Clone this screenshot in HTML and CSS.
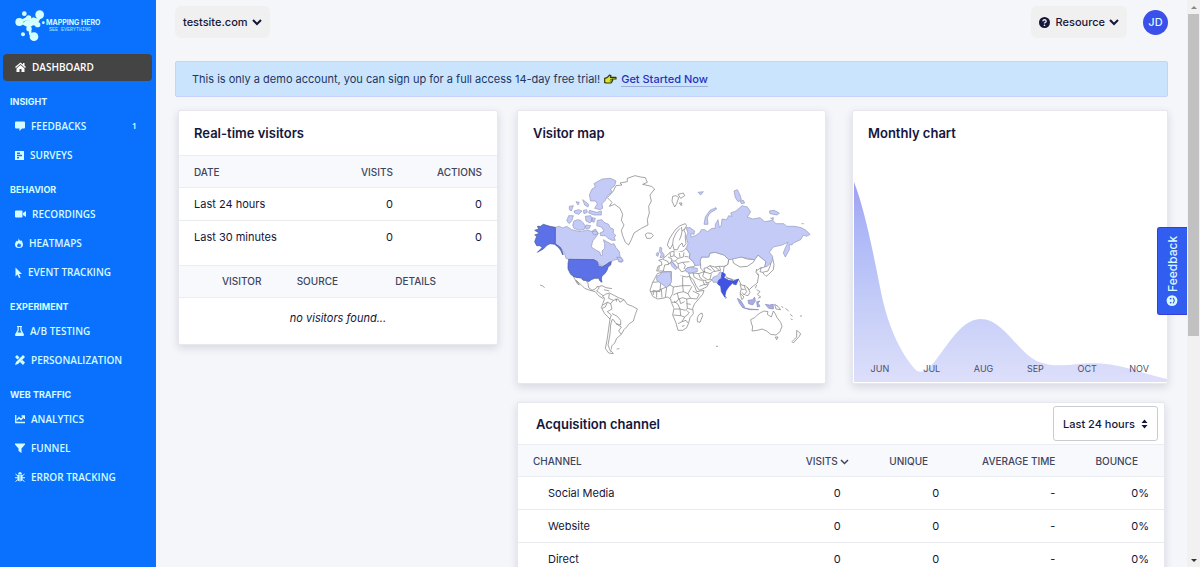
FILE: index.html
```html
<!DOCTYPE html>
<html lang="en">
<head>
<meta charset="utf-8">
<title>Mapping Hero - Dashboard</title>
<link rel="stylesheet" href="styles.css">
</head>
<body>
<div class="app">
  <aside class="sidebar">
    <div class="brand">
      <svg class="brand-mark" width="30" height="32" viewBox="0 0 90 96" aria-hidden="true">
        <g fill="#d4fdff" stroke="#d4fdff">
          <path d="M14 36 38 24 62 36M76 18 62 42M44 50 46 72 58 80" fill="none" stroke-width="8"/>
          <path d="M34 30Q46 34 54 22L70 26 66 48 54 46 42 54 20 42Z" stroke="none"/>
        </g>
        <g fill="#d4fdff">
          <circle cx="74" cy="14" r="13"/><circle cx="13" cy="36" r="12"/><circle cx="41" cy="24" r="8"/>
          <circle cx="68" cy="44" r="8"/><circle cx="42" cy="56" r="8"/><circle cx="57" cy="80" r="13"/>
          <circle cx="28" cy="11" r="7"/><circle cx="24" cy="73" r="6"/><circle cx="85" cy="38" r="4"/>
        </g>
      </svg>
      <div class="brand-text"><span class="brand-name">MAPPING HERO</span><span class="brand-tag">SEE EVERYTHING</span></div>
    </div>
    <nav>
      <a class="nav-item active" href="#"><svg width="11" height="10" viewBox="0 0 22 20"><path fill="currentColor" d="M11 1 0 10l2 2 9-8 9 8 2-2-3-2.500V2h-3v3zM11 6l-8 7v7h6v-6h4v6h6v-7z"/></svg>DASHBOARD</a>
      <h2 class="nav-title">INSIGHT</h2>
      <a class="nav-item" href="#"><svg width="10" height="10" viewBox="0 0 20 20"><path fill="currentColor" d="M2 1h16q2 0 2 2v10q0 2-2 2h-4l-5 5v-5H2q-2 0-2-2V3q0-2 2-2z"/></svg>FEEDBACKS<span class="count">1</span></a>
      <a class="nav-item" href="#"><svg width="9" height="9" viewBox="0 0 18 18"><path fill="currentColor" fill-rule="evenodd" d="M1 0h16q1 0 1 1v16q0 1-1 1H1q-1 0-1-1V1q0-1 1-1zM4 3v3h6V3zM4 7.500v3h10v-3zM4 12v3h4v-3z"/></svg>SURVEYS</a>
      <h2 class="nav-title">BEHAVIOR</h2>
      <a class="nav-item" href="#"><svg width="11" height="10" viewBox="0 0 22 20"><path fill="currentColor" d="M2 3h11q2 0 2 2v10q0 2-2 2H2q-2 0-2-2V5q0-2 2-2zM16 8l6-4v12l-6-4z"/></svg>RECORDINGS</a>
      <a class="nav-item" href="#"><svg width="8" height="10" viewBox="0 0 16 20"><path fill="currentColor" fill-rule="evenodd" d="M7 0q1 4 4 6l1-2q4 4 4 9 0 7-8 7t-8-7q0-5 4-8l1 2Q8 5 7 0zm1 10q-4 3-4 5 0 3 4 3t4-3q0-2-2-4l-1 2z"/></svg>HEATMAPS</a>
      <a class="nav-item" href="#"><svg width="7" height="11" viewBox="0 0 14 22"><path fill="currentColor" d="M1 1v18l4-4 3 7 3-1-3-7h6z"/></svg>EVENT TRACKING</a>
      <h2 class="nav-title">EXPERIMENT</h2>
      <a class="nav-item" href="#"><svg width="9" height="10" viewBox="0 0 18 20"><path fill="currentColor" fill-rule="evenodd" d="M4 0h10v2h-1v6l5 9q0 3-2 3H2q-2 0-2-3l5-9V2H4zM7.500 2v7L5 13h8l-2.500-4V2z"/></svg>A/B TESTING</a>
      <a class="nav-item" href="#"><svg width="10" height="10" viewBox="0 0 20 20"><path fill="currentColor" d="m4 0 5 5-4 4-5-5zM15 10l5 5-4 5-6-6zM16 0l4 4L6 18l-6 2 2-6z"/></svg>PERSONALIZATION</a>
      <h2 class="nav-title">WEB TRAFFIC</h2>
      <a class="nav-item" href="#"><svg width="10" height="10" viewBox="0 0 20 20"><path fill="none" stroke="currentColor" stroke-width="2.600" d="M1.500 2v15H20M4 12l4-5 4 4 6-6M13 4h6v6"/></svg>ANALYTICS</a>
      <a class="nav-item" href="#"><svg width="10" height="10" viewBox="0 0 20 20"><path fill="currentColor" d="M0 1h20v2l-7 8v9l-6-4v-5L0 3z"/></svg>FUNNEL</a>
      <a class="nav-item" href="#"><svg width="10" height="10" viewBox="0 0 20 20"><path fill="currentColor" d="M6 5q0-5 4-5t4 5zM5 6h4.300v13Q5 18 5 14zM10.700 6H15v8q0 4-4.300 5z"/><path fill="none" stroke="currentColor" stroke-width="2" d="M1 4l5 4M19 4l-5 4M0 11.500h6M20 11.500h-6M1 19l5-4M19 19l-5-4"/></svg>ERROR TRACKING</a>
    </nav>
  </aside>

  <main class="main">
    <header class="topbar">
      <button class="pill site" type="button">testsite.com<svg width="10" height="7" viewBox="0 0 10 7"><path d="M1 1l4 4 4-4" fill="none" stroke="currentColor" stroke-width="2"/></svg></button>
      <div class="top-right">
        <button class="pill" type="button"><svg class="help" width="11" height="11" viewBox="0 0 22 22"><circle cx="11" cy="11" r="11" fill="currentColor"/><path d="M7.500 8.500Q8 5.500 11 5.500t3.500 3Q14.500 10.500 11 12v1" fill="none" stroke="#f0f0f1" stroke-width="2.600"/><circle cx="11" cy="16.500" r="1.700" fill="#f0f0f1"/></svg>Resource<svg width="10" height="7" viewBox="0 0 10 7"><path d="M1 1l4 4 4-4" fill="none" stroke="currentColor" stroke-width="2"/></svg></button>
        <button class="avatar" type="button">JD</button>
      </div>
    </header>

    <p class="banner"><span>This is only a demo account, you can sign up for a full access 14-day free trial!</span>
      <svg width="13" height="10" viewBox="0 0 39 30" aria-hidden="true"><path d="M2 13 9 11 17 3l4 2-2 5h17v5H25l1 4-2 4-3 4H8l-6-1z" fill="#dbe632" stroke="#30370c" stroke-width="3.500" stroke-linejoin="round"/><path d="M18 16h7M17 21h7" stroke="#30370c" stroke-width="2"/></svg>
      <a href="#">Get Started Now</a></p>

    <div class="board">
      <section class="card visitors">
        <h3 class="card-title">Real-time visitors</h3>
        <table class="totals">
          <thead><tr><th class="c-date">DATE</th><th class="c-visits">VISITS</th><th class="c-actions">ACTIONS</th></tr></thead>
          <tbody><tr><td>Last 24 hours</td><td>0</td><td>0</td></tr><tr><td>Last 30 minutes</td><td>0</td><td>0</td></tr></tbody>
        </table>
        <table class="recent">
          <thead><tr><th class="c-visitor">VISITOR</th><th class="c-source">SOURCE</th><th>DETAILS</th></tr></thead>
          <tbody><tr><td colspan="3">no visitors found...</td></tr></tbody>
        </table>
      </section>

      <div class="wide">
        <div class="pair">
          <section class="card">
            <h3 class="card-title">Visitor map</h3>
            <svg class="map" viewBox="0 0 900 600" role="img" aria-label="World map of visitors">
              <g class="land">
                <path d="M268 104 262 98 280 78 288 62 306 60 300 54 322 50 322 40 345 32 362 36 376 38 382 52 368 58 394 64 404 72 390 90 394 108 386 124 388 144 382 164 384 180 364 190 342 204 334 224 326 240 316 232 308 212 304 196 312 180 304 166 308 148 300 130 284 118 268 124 276 112Z"/>
                <path d="M376 208 382 204 394 205 400 212 392 220 380 220Z"/>
                <path d="M160 334 180 338 188 344 198 346 204 356 206 368 216 376 226 372 232 364 238 368 230 378 236 382 246 390 256 396 248 400 236 392 226 380 210 376 194 370 182 358 168 346 178 360 172 356Z"/>
                <path d="M232 366 246 362 258 368 276 371M252 374 268 378M60 360 68 363 74 368M290 552 298 551"/>
                <path d="M256 388 268 384 284 392 300 400 312 404 322 418 338 424 352 432 346 448 340 468 328 476 320 486 312 494 304 508 290 520 284 534 276 542 272 556 280 566 266 564 256 550 262 520 266 490 270 462 254 446 244 428 250 412 254 400 248 394Z"/>
                <path d="M268 386 266 400 280 406 272 416 262 412 248 420M280 406 294 402 300 412 312 404M288 400 290 410M272 416 276 432 262 440 274 450 270 462M276 446 292 454 302 466 302 480 288 476 280 464 276 464 272 480 270 508 264 540 272 560M288 476 304 486 296 498 304 508M262 412 256 426 246 430"/>
              </g>
              <g class="light">
                <path d="M106 187 118 184 128 189 140 184 155 194 172 198 185 200 200 195 215 199 226 192 235 205 228 216 218 228 214 246 226 254 240 262 242 272 248 270 246 258 254 250 254 236 250 224 264 232 274 238 282 236 288 248 298 260 300 274 308 284 306 292 296 290 294 282 280 286 272 292 262 296 250 304 240 300 232 290 222 284 146 283 138 280 134 266 126 254 118 244 106 238Z"/>
                <path d="M240 134 224 130 232 116 226 108 212 108 208 90 216 72 226 66 222 56 246 42 272 40 288 48 284 62 272 72 276 82 262 92 256 106 246 116 248 130Z"/>
                <path d="M232 166 246 164 252 172 266 178 270 188 280 192 280 204 288 212 282 216 286 226 276 226 264 220 256 212 242 212 240 204 252 198 244 186 230 182Z"/>
                <path d="M158 180 162 168 172 164 182 166 190 174 196 184 192 194 178 196 162 190ZM146 152 160 152 156 166 148 176 140 168ZM196 154 212 152 218 166 210 174 198 168ZM208 136 230 142 244 138 244 150 222 150 206 144ZM162 138 176 134 186 138 176 148 164 144ZM148 124 160 122 154 138 148 134ZM188 104 196 110 206 118 204 126 194 120ZM168 110 178 112 174 120ZM190 136 200 134 202 142 192 146ZM216 200 228 198 234 206 222 210ZM198 180 212 182 206 192 196 190ZM216 158 226 160 222 172 214 168Z"/>
                <path d="M290 276 304 278 310 288 298 290Z"/>
                <path d="M420 246 426 250 424 258 432 268 432 276 420 278 424 268 418 260ZM412 262 416 264 414 274 408 270Z"/>
              </g>
              <path class="strong" d="M106 187 90 184 70 178 62 184 52 184 56 192 44 196 54 202 60 204 44 210 50 214 46 224 44 230 50 242 60 242 66 248 52 262 70 252 82 240 90 236 104 238 116 248 122 256 128 270 130 268 122 248 106 236Z"/>
              <path class="strong" d="M146 283 222 284 232 290 236 302 246 306 260 298 268 292 274 290 272 300 264 306 262 314 256 324 246 334 244 342 246 352 240 348 236 340 224 340 214 344 206 350 198 346 190 346 184 338 172 338 160 334 152 328 144 312 144 296Z"/>
              <g transform="translate(420 0)">
                <g class="land">
                  <path d="M38 94 48 92 56 98 50 116 44 126 36 108ZM54 88 70 84 74 92 62 100ZM58 114 66 114 64 122Z"/>
                  <path d="M22 240 28 222 38 206 48 192 60 182 76 176 80 182 72 196 76 204 76 220 78 236 70 246 66 234 58 242 52 254 42 254 38 238 30 252ZM60 190 48 204 40 222 38 238M64 186 66 198 64 210 58 226M66 198 74 192"/>
                  <path d="M22 270 30 262 42 258 52 262 70 258 78 250 90 266 88 280 100 290 106 302 96 306 82 308 74 318 64 320 58 312 48 302 40 294 34 290 26 298 14 300 10 318-10 318-6 304 6 300 4 290-4 286 8 282Z"/>
                  <path d="M-2 304-4 316M8 282 24 290 26 298M24 276 36 282 34 290M42 258 42 272 54 280 70 276 72 262M30 262 32 276 42 272M54 280 46 288 54 296 68 292 88 290M46 288 36 288M54 296 56 308M68 292 76 302 72 312M58 264 60 276M74 274 86 276"/>
                  <path d="M-8 326 10 320 34 320 38 330 50 334 60 332 80 336 88 334 94 348 104 364 110 380 132 376 128 388 116 402 104 416 98 430 100 446 90 458 86 474 80 488 68 496 54 496 48 474 38 450 42 430 34 412 32 402 22 396 8 400-8 402-22 394-30 376-22 352Z"/>
                  <path d="M-22 352 0 350M-4 336 2 352 0 380-22 376M34 320 34 342 30 360 40 366 68 362 68 334M-28 380-10 380 4 372 20 366 30 360M68 362 92 362M40 366 38 386 30 400M40 390 52 384 70 380 68 362M20 366 16 396M4 372 6 398M-10 380-10 398M-20 380-20 390M70 380 84 386 96 364M84 386 92 400 110 402 118 388 98 378M92 400 80 402 68 398 56 402 52 384M56 402 48 412 36 412M80 402 82 430 98 434M42 408 54 418 60 432 42 432M60 432 76 436 82 430M60 432 62 452 40 450M62 452 74 456 88 444 80 436M74 456 66 470 54 476M66 470 78 466 84 474M58 402 62 416 74 410M80 416 92 418M66 484 74 482"/>
                  <path d="M118 448 126 444 128 452 120 472 112 470 112 458Z"/>
                  <path d="M86 324 100 324 116 326 132 320 128 334 142 344 156 344 148 352 138 354 138 346 128 346 134 360 146 356 140 366 118 376 108 362 100 344 90 336ZM100 324 102 336 116 344 126 346M116 326 120 338 128 344M118 364 134 358"/>
                  <path d="M122 300 120 288 124 276 146 276 150 264 166 262 192 270 206 284 204 300 192 304 178 304 164 306 150 302 140 308 132 310 134 322 122 310ZM132 320 150 326 160 320 182 316 178 304M150 302 164 318M140 308 154 316M166 306 178 316M154 326 150 342"/>
                  <path d="M206 284 218 280 244 276 262 282 284 284 294 270 306 280 318 290 314 306 300 310 288 318 296 330 292 354 276 366 268 374 256 362 244 360 236 344 218 346 200 338 190 322 192 306 204 298ZM218 282 220 294 240 306 262 304 280 292 284 284M304 306 300 320 308 322"/>
                  <path d="M330 266 338 280 342 298 340 314 326 328 318 334 312 328 308 322 324 318 330 304 334 290M290 312 288 322 294 330"/>
                  <path d="M240 356 244 372 240 384 252 396 246 404 240 386M252 362 260 380 252 390 246 382M262 366 270 382 264 392 256 390M244 372 254 374M290 374 300 380 292 388 302 396 294 400M286 370 290 360M194 392 200 398 196 400ZM218 346 222 360 226 346M200 338 220 344"/>
                  <path d="M272 464 284 458 292 450 300 444 312 438 324 440 322 448 334 456 340 438 346 446 350 456 362 472 366 484 360 500 348 510 332 508 320 498 306 492 292 496 276 498 278 486 274 474ZM346 516 354 516 350 524Z"/>
                  <path d="M410 496 422 506 418 514 400 534 396 530 410 516ZM344 418 354 424 362 434 348 432ZM364 424 370 428M376 430 386 438M390 448 398 454M392 462 398 464M420 454 426 452M168 544 174 544"/>
                </g>
                <g class="light">
                  <path d="M78 188 90 188 104 198 102 208 92 206 94 216 106 212 118 204 124 194 134 194 142 200 156 190 166 190 166 178 174 164 178 188 184 180 186 162 200 164 206 152 216 154 212 144 228 138 246 122 262 126 272 140 262 156 278 162 300 158 314 170 338 166 348 176 372 176 380 184 404 184 424 188 438 196 450 208 440 214 430 210 422 224 400 234 396 240 388 238 388 254 376 276 370 264 376 248 384 232 366 240 340 246 328 262 338 274 336 290 322 304 314 306 318 290 306 280 294 270 284 284 262 280 244 276 218 282 206 284 192 270 166 262 150 264 146 276 124 276 120 290 122 300 106 302 100 290 88 280 90 266 78 250 84 236 78 216 84 204Z"/>
                  <path d="M132 178 136 156 150 136 168 128 170 132 150 144 142 158 144 178ZM222 78 232 74 240 90 244 104 234 110 226 98ZM240 108 250 106 254 114 244 116ZM328 138 342 136 358 144 352 150 330 146ZM332 160 340 158 340 164ZM114 82 130 80 122 90ZM424 176 432 176"/>
                  <path d="M-10 334 2 328 4 322 30 320 34 342 34 352 20 368-4 350-10 346ZM30 292 38 292 44 300 52 310 46 314 36 304ZM76 312 90 306 112 310 112 320 92 324 78 320ZM156 344 160 336 172 332 180 320 188 324 184 336 172 352 160 352Z"/>
                </g>
                <g class="purple"><path d="M232 400 242 406 254 426 248 428 238 414ZM250 428 270 432 296 434 268 434ZM264 406 278 404 284 396 286 408 278 420 266 416ZM290 410 300 408 294 414 300 424 292 426ZM316 418 328 420 340 418 340 432 326 430Z"/></g>
                <path class="vivid" d="M186 322 196 328 192 338 206 346 220 348 236 342 228 360 218 354 206 366 198 378 194 396 184 380 182 364 172 356 176 346 184 340Z"/>
              </g>
            </svg>
          </section>
          <section class="card monthly">
            <h3 class="card-title">Monthly chart</h3>
            <div class="chart">
              <svg viewBox="42 246 942 600" preserveAspectRatio="none" role="img" aria-label="Monthly visits">
                <defs><linearGradient id="fade" x1="0" y1="0" x2="0" y2="1"><stop offset="0" stop-color="#a09df2"/><stop offset=".2" stop-color="#abb5f6"/><stop offset=".65" stop-color="#c7cff8"/><stop offset="1" stop-color="#dddffa"/></linearGradient></defs>
                <path fill="url(#fade)" d="M42 246C75 330 100 460 122 570C145 690 190 770 228 810Q250 826 275 796C310 760 360 657 422 657C490 657 530 750 590 782C650 808 700 790 760 790C850 790 900 820 984 837V846H42Z"/>
              </svg>
              <div class="months"><span>JUN</span><span>JUL</span><span>AUG</span><span>SEP</span><span>OCT</span><span>NOV</span></div>
            </div>
          </section>
        </div>

        <section class="card acquisition">
          <div class="card-head">
            <h3>Acquisition channel</h3>
            <label class="period"><select aria-label="Period"><option>Last 24 hours</option></select><svg width="7" height="10" viewBox="0 0 14 20"><path fill="currentColor" d="M7 1l6 7H1zM7 19l6-7H1z"/></svg></label>
          </div>
          <table class="channels">
            <thead><tr><th class="c-channel">CHANNEL</th><th class="c-v">VISITS<svg width="9" height="6" viewBox="0 0 9 6"><path d="M1 1l3.500 3.500L8 1" fill="none" stroke="currentColor" stroke-width="1.500"/></svg></th><th class="c-unique">UNIQUE</th><th class="c-time">AVERAGE TIME</th><th class="c-bounce">BOUNCE</th></tr></thead>
            <tbody>
              <tr><td>Social Media</td><td class="v">0</td><td>0</td><td>-</td><td>0%</td></tr>
              <tr><td>Website</td><td class="v">0</td><td>0</td><td>-</td><td>0%</td></tr>
              <tr><td>Direct</td><td class="v">0</td><td>0</td><td>-</td><td>0%</td></tr>
            </tbody>
          </table>
        </section>
      </div>
    </div>
  </main>

  <div class="scrollbar" aria-hidden="true"><i class="up"></i><b></b><i class="down"></i></div>
  <button class="feedback" type="button"><svg width="12" height="12" viewBox="0 0 24 24"><circle cx="12" cy="12" r="12" fill="#d9faff"/><g fill="#315df0"><circle cx="15" cy="7.500" r="2"/><circle cx="15" cy="16.500" r="2"/></g><path d="M10 6q-6 6 0 12" fill="none" stroke="#315df0" stroke-width="2.500"/></svg>Feedback</button>
</div>
</body>
</html>
```

FILE: styles.css
```css
* { box-sizing: border-box; }
body { margin: 0; font: 11px/16px Inter, "Liberation Sans", sans-serif; color: #14163a; background: #f5f6fa; }
h2, h3, p { margin: 0; }
button, select { font: inherit; color: inherit; border: 0; }
button { cursor: pointer; }

.app { position: relative; display: grid; grid-template-columns: 156px minmax(0, 1fr) 13px; height: 100vh; overflow: hidden; }

.sidebar { background: #0a71ff; border-right: 1px solid #4657ff; color: #d4fbff; }
.brand { display: flex; align-items: center; height: 54px; padding: 0 0 3px 15px; gap: 1px; }
.brand-text { display: flex; flex-direction: column; }
.brand-name { font: 700 7px/8px Inter, sans-serif; }
.brand-tag { font: 500 5px/6px "Liberation Mono", monospace; padding-left: 3px; color: #a5e6ff; }
.nav-item { display: flex; align-items: center; gap: 6px; height: 29px; padding: 0 18px 1px 15px; color: inherit; text-decoration: none; font: 600 10px/14px "Open Sans", "Noto Sans", sans-serif; }
.nav-item.active { height: 27px; margin: 0 3px 1px; padding-left: 12px; border-radius: 4px; background: #444; color: #fff; }
.nav-title { padding: 13px 10px 4px; font: 700 9px/13px Inter, sans-serif; }
.count { margin-left: auto; font-size: 9px; }

.main { min-width: 0; padding: 0 19px; overflow: hidden; }
.topbar { display: flex; justify-content: space-between; align-items: center; padding-top: 6px; height: 38px; }
.top-right { display: flex; align-items: center; gap: 16px; }
.pill { display: flex; align-items: center; gap: 4px; height: 32px; padding: 0 8px; border-radius: 6px; background: #f0f0f1; font-weight: 500; }
.help { margin-right: 2px; }
.avatar { width: 25px; height: 25px; padding: 0; border-radius: 50%; background: #3b50ea; color: #d9faff; font-weight: 500; }
.banner { display: flex; align-items: center; gap: 4px; height: 36px; margin: 23px 0 13px; padding: 0 16px; border: 1px solid #c9d0fb; border-radius: 2px; background: #cbe4fe; }
.banner span { color: #20355f; }
.banner a { color: #2632bd; font-weight: 500; text-decoration: none; border-bottom: 1px solid #9dafd8; line-height: 14px; }

.board { display: grid; grid-template-columns: minmax(0, 320fr) minmax(0, 651fr); gap: 19px; align-items: start; padding-left: 3px; }
.wide { display: flex; flex-direction: column; gap: 18px; }
.pair { display: grid; grid-template-columns: minmax(0, 309fr) minmax(0, 316fr); gap: 26px; }
.card { background: #fff; border: 1px solid #e6e8ee; border-radius: 2px; box-shadow: 0 3px 8px rgba(30, 35, 70, .14); }
.card-title { padding: 14px 15px; }
h3 { font-size: 13px; font-weight: 600; }

table { width: 100%; border-collapse: collapse; table-layout: fixed; }
th { height: 32px; padding: 0 15px; background: #f8f9fc; border: solid #eaedf1; border-width: 1px 0; color: #3e4560; font-size: 10px; font-weight: 500; text-align: right; white-space: nowrap; }
td { height: 33px; padding: 0 15px; text-align: right; border-bottom: 1px solid #e9ebef; }
th:first-child, td:first-child { text-align: left; }
.c-visits { width: 28%; }
.c-actions { width: 28%; }
.totals tr:last-child td { border-bottom: 0; }
.totals { margin-bottom: 11px; }
.recent th { text-align: left; padding: 0; }
.recent .c-visitor { width: 37%; padding-left: 43px; }
.c-source { width: 31%; }
.recent td { height: 47px; padding-bottom: 6px; border: 0; text-align: center; font-style: italic; }

.map { display: block; width: calc(100% - 7px); margin: 10px 2px 18px; }
.map path { stroke-width: 2; stroke-linejoin: round; }
.land { fill: #fff; stroke: #777; }
.light { fill: #c4cbf7; stroke: #9298bd; }
.purple { fill: #aaaee8; stroke: #8589bd; }
.strong { fill: #5c70e8; stroke: #495793; }
.vivid { fill: #4053e5; stroke: #4053c0; }

.monthly { display: flex; flex-direction: column; }
.chart { flex: 1; display: grid; grid-template-rows: 1fr; padding: 26px 0 1px 1px; }
.chart > * { grid-area: 1 / 1; }
.chart svg { display: block; width: 100%; height: 200px; align-self: end; }
.months { display: grid; grid-template-columns: repeat(6, 1fr); align-self: end; padding: 0 2px 6px 0; font-size: 9px; line-height: 14px; text-align: center; color: #4b5068; }

.acquisition { margin-right: 3px; }
.card-head { display: flex; align-items: center; justify-content: space-between; height: 41px; padding: 0 6px 0 18px; }
.period { display: grid; align-items: center; }
.period > * { grid-area: 1 / 1; }
.period svg { justify-self: end; margin-right: 10px; pointer-events: none; }
.period select { appearance: none; height: 35px; padding: 0 22px 0 9px; border: 1px solid #c9ccd3; border-radius: 3px; background: #fff; font-weight: 500; }
.channels td:first-child { padding-left: 30px; }
.c-v { width: 24%; }
.c-v svg { margin-left: 2px; }
.channels .v { padding-right: 23px; }
.c-unique { width: 14%; }
.channels .c-unique { padding-right: 26px; }
.c-time { width: 18%; }
.c-bounce { width: 14.5%; }
.channels .c-bounce { padding-right: 26px; }

.scrollbar { display: flex; flex-direction: column; align-items: center; justify-content: space-between; background: #f1f1f1; padding: 6px 0 5px; }
.scrollbar b { width: 11px; height: 58%; margin-bottom: auto; margin-top: 5px; background: #c1c1c1; }
.scrollbar i { border: 3px solid transparent; }
.scrollbar .up { border-top: 0; border-bottom-color: #888; }
.scrollbar .down { border-bottom: 0; border-top-color: #333; }

.feedback { position: absolute; right: 13px; top: 40%; display: flex; align-items: center; gap: 3px; width: 30px; height: 88px; padding: 8px 7px; border: 1px solid #3b3cd5; border-left: 0; border-radius: 0 3px 3px 0; background: #315df0; color: #d9faff; font-size: 12px; font-weight: 500; writing-mode: vertical-rl; transform: rotate(180deg); }
```
